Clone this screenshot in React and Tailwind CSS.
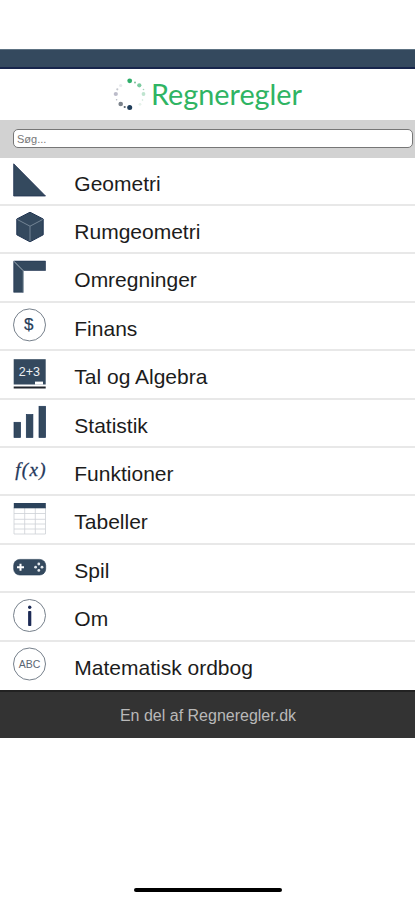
import { useState } from 'react';

function TriangleIcon() {
  return <path d="M.7 .8V33H32.5Z" fill="#34495e" stroke="#1f3152" strokeWidth=".8" />;
}

function CubeIcon() {
  return (
    <>
      <path d="M17 .2 30.2 7V22.8L17 29.8 3.8 22.8V7Z" fill="#34495e" stroke="#1f3350" strokeWidth="1" />
      <path d="M4.3 7.5 17 14.2 29.7 7.5M17 14.2V29.3" fill="none" stroke="#7b8b9b" strokeWidth=".9" />
    </>
  );
}

function RulerIcon() {
  return (
    <>
      <path d="M.7 1.1H32.5V10.5H10.3V32.3H.7Z" fill="#34495e" stroke="#1f3350" strokeWidth=".6" />
      <path d="M.7 1.1 10.3 10.8V32" fill="none" stroke="#a3afb9" strokeWidth="1" />
    </>
  );
}

function DollarIcon() {
  return (
    <>
      <circle cx="16.5" cy="16.9" r="16" fill="#fff" stroke="#66727e" strokeWidth=".9" />
      <text x="15.7" y="22.3" textAnchor="middle" fill="#263d59" stroke="#263d59" strokeWidth=".2" className="font-['Liberation_Sans',Arial,sans-serif] text-[17px]">$</text>
    </>
  );
}

function BoardIcon() {
  return (
    <>
      <rect x=".7" y="2.2" width="32" height="25.3" fill="#34495e" />
      <rect x="22" y="24.6" width="8" height="3" fill="#fff" />
      <rect x=".7" y="29.5" width="32" height="2" fill="#20252c" />
      <text x="16.3" y="18.7" textAnchor="middle" fill="#eef1f4" className="font-['Liberation_Sans',Arial,sans-serif] text-[12.5px]">2+3</text>
    </>
  );
}

function BarsIcon() {
  return (
    <g fill="#34495e" stroke="#203858" strokeWidth=".7">
      <rect x="1" y="17.3" width="6.6" height="15.2" />
      <rect x="13.3" y="9.5" width="6.6" height="23" />
      <rect x="26" y="1.3" width="6.6" height="31.2" />
    </g>
  );
}

function FunctionIcon() {
  return (
    <text x="17.4" y="22" textAnchor="middle" textLength="30.5" fill="#23375a" stroke="#23375a" strokeWidth=".3" className="font-['Liberation_Serif','Times_New_Roman',serif] text-[19px] italic">f(x)</text>
  );
}

function TableIcon() {
  return (
    <>
      <path d="M1 5V32H32.5V5M1 11.5H32.5M1 17.3H32.5M1 22H32.5M1 27H32.5M11.7 5V32M22.3 5V32" fill="none" stroke="#cdd1d5" strokeWidth=".8" />
      <rect x=".8" y="1" width="32" height="5.3" fill="#2b425b" />
    </>
  );
}

function GamepadIcon() {
  return (
    <>
      <rect x=".7" y="9.4" width="32" height="15.6" rx="6" fill="#34495e" stroke="#233a52" strokeWidth=".6" />
      <path d="M4 17.2H11M7.5 13.7V20.7" stroke="#fff" strokeWidth="2" />
      <g fill="#e3e8ed">
        <circle cx="25.8" cy="14" r="1.4" />
        <circle cx="25.8" cy="20.4" r="1.4" />
        <circle cx="22.6" cy="17.2" r="1.4" />
        <circle cx="29" cy="17.2" r="1.4" />
      </g>
    </>
  );
}

function InfoIcon() {
  return (
    <>
      <circle cx="16.5" cy="16.5" r="16" fill="#fff" stroke="#66727e" strokeWidth=".9" />
      <circle cx="16.7" cy="8.3" r="1.7" fill="#1c2a55" />
      <rect x="15.1" y="12" width="3.2" height="15" rx=".8" fill="#1c2a55" />
    </>
  );
}

function AbcIcon() {
  return (
    <>
      <circle cx="16.5" cy="17" r="16" fill="#fff" stroke="#66727e" strokeWidth=".9" />
      <text x="16.5" y="20.8" textAnchor="middle" fill="#5b6672" className="font-['Liberation_Sans',Arial,sans-serif] text-[10.5px]">ABC</text>
    </>
  );
}

const topics = [
  { label: 'Geometri', Icon: TriangleIcon },
  { label: 'Rumgeometri', Icon: CubeIcon },
  { label: 'Omregninger', Icon: RulerIcon },
  { label: 'Finans', Icon: DollarIcon },
  { label: 'Tal og Algebra', Icon: BoardIcon },
  { label: 'Statistik', Icon: BarsIcon },
  { label: 'Funktioner', Icon: FunctionIcon },
  { label: 'Tabeller', Icon: TableIcon },
  { label: 'Spil', Icon: GamepadIcon },
  { label: 'Om', Icon: InfoIcon },
  { label: 'Matematisk ordbog', Icon: AbcIcon },
];

const dots = [
  [17.7, 2.8, 2.4, '#2fae6a'],
  [23, 4.5, 1, '#7dbf9b'],
  [27.3, 7.3, 2.1, '#7ccba0'],
  [31.5, 11.5, 0.8, '#a5d3ba'],
  [31.5, 16, 1.9, '#bfe4cf'],
  [30.5, 22, 0.8, '#cfe6d9'],
  [28, 26.3, 1.4, '#e6f2ea'],
  [17.7, 29.5, 2.5, '#1f3d5a'],
  [12.7, 29, 1.1, '#55606c'],
  [8.7, 26, 2.3, '#7c838c'],
  [4.6, 21.7, 0.8, '#b5b9c2'],
  [3.8, 16, 2.1, '#bcbcca'],
  [5.3, 11.3, 1.1, '#c3c6cd'],
  [8.7, 7.5, 1.6, '#e6e8ec'],
];

function Logo() {
  return (
    <div className="flex h-[51px] items-center justify-center bg-white pr-px">
      <svg viewBox="0 0 36 34" className="h-[34px] w-9 shrink-0">
        {dots.map(([cx, cy, r, fill], i) => (
          <circle key={i} cx={cx} cy={cy} r={r} fill={fill} />
        ))}
      </svg>
      <h1 className="mb-0.5 ml-[3px] font-['Lato',sans-serif] text-[28.8px] leading-[34px] text-[#2fb463]">Regneregler</h1>
    </div>
  );
}

export default function App() {
  const [query, setQuery] = useState('');
  const visible = topics.filter(t => t.label.toLowerCase().includes(query.toLowerCase()));

  return (
    <div className="flex h-[900px] w-full flex-col overflow-hidden bg-white pt-[49px] font-['Liberation_Sans',Arial,sans-serif]">
      {/* Status strip */}
      <div className="h-5 border-t border-b-2 border-t-[#5d7282] border-b-[#17254c] bg-[#34495e]"></div>

      <Logo />

      {/* Search */}
      <div className="h-[37.6px] bg-[#d2d2d2] pt-[9px] pr-0.5 pl-[13px]">
        <input
          value={query}
          onChange={e => setQuery(e.target.value)}
          placeholder="Søg..."
          className="block h-[19px] w-full rounded-[5px] border border-[#777] bg-white px-[3px] text-[11px] leading-none text-gray-700 placeholder:text-[#777] focus:outline-none"
        />
      </div>

      {/* Topics */}
      <ul>
        {visible.map(({ label, Icon }, i) => (
          <li
            key={label}
            className={`flex h-[48.42px] items-start pl-[13px] ${i < visible.length - 1 ? 'border-b-2 border-[#e8e8e8]' : ''}`}
          >
            <svg viewBox="0 0 34 34" className="mt-[5.5px] h-[34px] w-[34px] shrink-0">
              <Icon />
            </svg>
            <span className="mt-[14px] ml-[27.3px] text-[21px] leading-6 text-[#1c1c1c]">{label}</span>
          </li>
        ))}
      </ul>

      <footer className="flex h-12 items-center justify-center border-t-2 border-[#222] bg-[#333] pt-px pl-px text-base text-[#b9b9b9]">
        En del af Regneregler.dk
      </footer>

      {/* Home indicator */}
      <div className="mx-auto mt-auto mb-2 h-1 w-[148px] rounded-full bg-black"></div>
    </div>
  );
}
